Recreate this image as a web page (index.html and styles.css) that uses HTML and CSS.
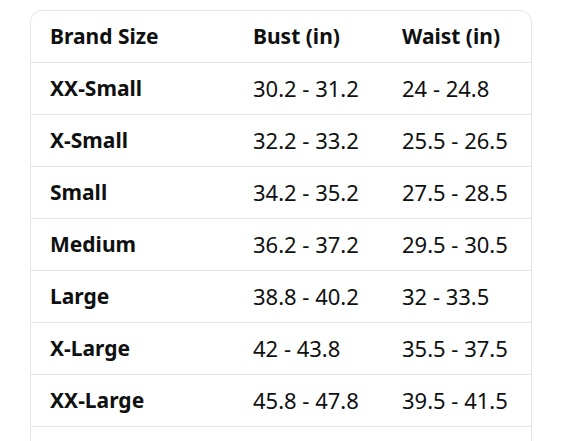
FILE: index.html
```html
<!DOCTYPE html>
<html lang="en">
<head>
    <meta charset="UTF-8">
    <meta name="viewport" content="width=device-width, initial-scale=1.0">
    <title>Size Chart</title>
    <link rel="stylesheet" href="styles.css">
</head>
<body>
    <div class="card">
        <table class="size-table">
            <thead>
                <tr>
                    <th class="col-size">Brand Size</th>
                    <th class="col-bust">Bust (in)</th>
                    <th class="col-waist">Waist (in)</th>
                </tr>
            </thead>
            <tbody>
                <tr><th>XX-Small</th><td>30.2 - 31.2</td><td>24 - 24.8</td></tr>
                <tr><th>X-Small</th><td>32.2 - 33.2</td><td>25.5 - 26.5</td></tr>
                <tr><th>Small</th><td>34.2 - 35.2</td><td>27.5 - 28.5</td></tr>
                <tr><th>Medium</th><td>36.2 - 37.2</td><td>29.5 - 30.5</td></tr>
                <tr><th>Large</th><td>38.8 - 40.2</td><td>32 - 33.5</td></tr>
                <tr><th>X-Large</th><td>42 - 43.8</td><td>35.5 - 37.5</td></tr>
                <tr><th>XX-Large</th><td>45.8 - 47.8</td><td>39.5 - 41.5</td></tr>
                <tr class="row-more"><th></th><td></td><td></td></tr>
            </tbody>
        </table>
    </div>
</body>
</html>
```

FILE: styles.css
```css
body {
    margin: 0;
    background: #fff;
    font-family: "Noto Sans", "Open Sans", sans-serif;
    color: #0f1111;
}
.card {
    margin: 10px 0 0 30px;
    width: 500px;
    border: 1px solid #e3e6e6;
    border-radius: 12px;
    overflow: hidden;
}
.size-table {
    width: 100%;
    border-collapse: collapse;
    table-layout: fixed;
}
.size-table th,
.size-table td {
    height: 51px;
    padding: 0;
    text-align: left;
    font-size: 21px;
    line-height: 51px;
    white-space: nowrap;
    box-sizing: border-box;
}
.size-table th {
    font-weight: 700;
}
.size-table td {
    font-size: 22px;
    font-weight: 400;
}
.size-table tr {
    border-bottom: 1px solid #e3e6e6;
}
.size-table tr th:first-child {
    padding-left: 19px;
}
.col-size {
    width: 222px;
}
.col-bust {
    width: 149px;
}
```
